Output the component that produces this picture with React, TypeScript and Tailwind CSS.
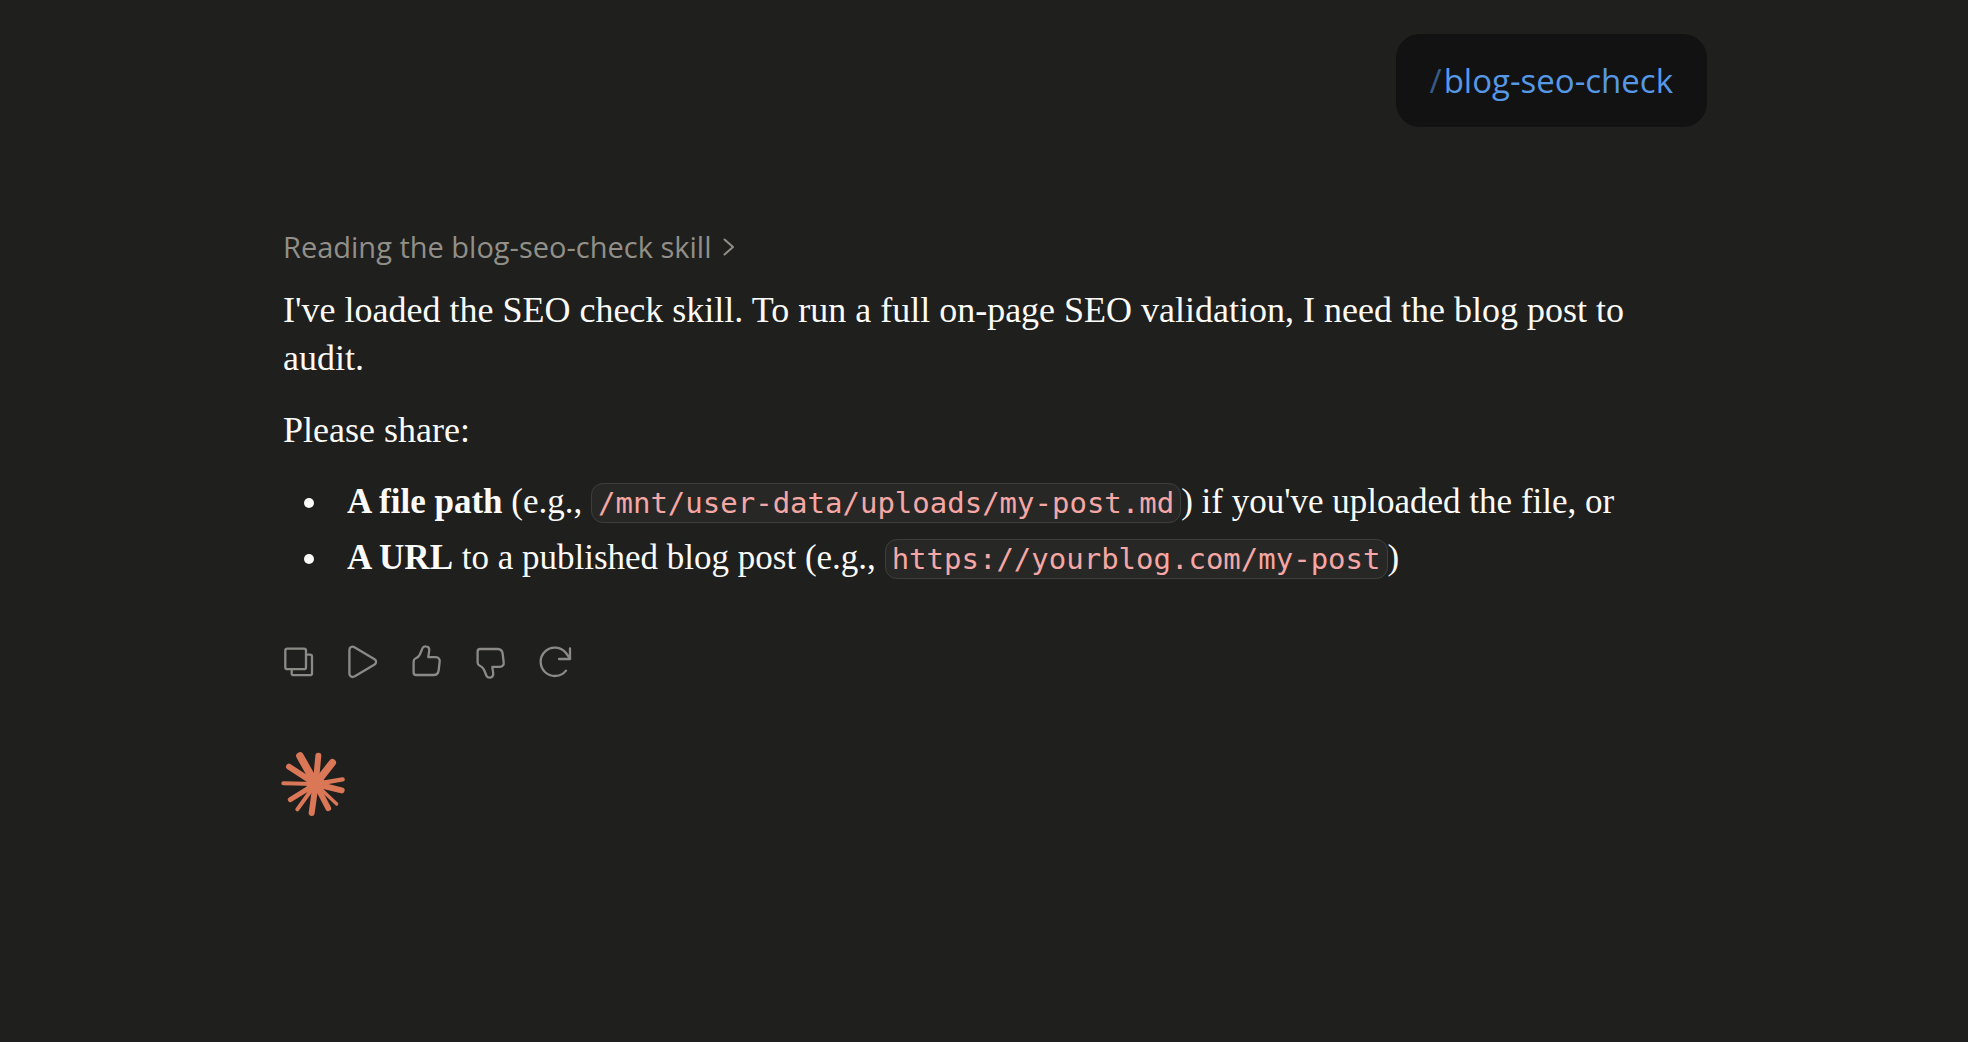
import type { ReactNode } from "react";

const THUMB =
  "M7.6 19.4c0-1.6.8-2.5 2.2-3.1 1.9-.8 3-1.7 3.9-3.6 1.1-2.3 1.8-4.2 2.7-6.3C17 4.8 18.4 4.2 20 4.4c2.2.2 3.4 2 3.2 4.2l-.9 6.6h7.6c2.5 0 4.1 1.9 3.8 4.2l-1 8.6c-.3 2.9-2.1 5-5 5H10.1c-1.5 0-2.5-1-2.5-2.5z";

function IconButton({ label, children }: { label: string; children: ReactNode }) {
  return (
    <button type="button" aria-label={label} className="flex size-10 items-center justify-center text-[#8b8a86]">
      <svg viewBox="0 0 40 40" className="size-10" fill="none" stroke="currentColor" strokeWidth={2.3} strokeLinecap="round" strokeLinejoin="round">
        {children}
      </svg>
    </button>
  );
}

function Code({ children }: { children: ReactNode }) {
  return (
    <code className="rounded-xl border border-[#3e3e3b] bg-[#272725] px-[6px] py-[2px] font-['DejaVu_Sans_Mono',monospace] text-[29px] leading-none text-[#f5a7a5]">
      {children}
    </code>
  );
}

/* Tip x, tip y and stroke width of each ray. */
const RAYS: [number, number, number][] = [
  [90, 48, 23],
  [145, 47, 18],
  [187, 68, 22],
  [218, 118, 13],
  [215, 151, 18],
  [200, 192, 10],
  [175, 205, 17],
  [125, 219, 18],
  [82, 208, 12],
  [61, 179, 15],
  [40, 130, 12],
  [57, 80, 18],
];

function Burst() {
  return (
    <svg viewBox="39 33 192 198" className="h-[66px] w-16 overflow-visible text-[#d97757]" stroke="currentColor" strokeLinecap="round" aria-hidden="true">
      {RAYS.map(([x, y, w]) => (
        <line key={`${x}-${y}`} x1={137} y1={132} x2={x} y2={y} strokeWidth={w} />
      ))}
      <circle cx={137} cy={132} r={28} fill="currentColor" stroke="none" />
    </svg>
  );
}

export default function App() {
  return (
    <main className="min-h-screen bg-[#1f1f1d] text-[#fbfbfa]">
      <div className="mx-auto max-w-[1446px] pt-[34px]">
        <div className="flex justify-end">
          <div className="rounded-3xl bg-[#121212] px-[34px] py-6 font-['Open_Sans',sans-serif] text-[33px] leading-[45px] text-[#5698e5]">
            <span className="mr-[2px] text-[#385a86]">/</span>blog-seo-check
          </div>
        </div>

        <article className="mt-[100px] pr-5 pl-[22px]">
          <button type="button" className="flex items-center gap-3 font-['Open_Sans',sans-serif] text-[29px] leading-10 text-[#918f88]">
            Reading the blog-seo-check skill
            <svg viewBox="0 0 12 20" className="h-5 w-3" fill="none" stroke="currentColor" strokeWidth={2} strokeLinecap="round" strokeLinejoin="round" aria-hidden="true">
              <path d="M1.5 2.5 10 10l-8.500 7.500" />
            </svg>
          </button>

          <div className="mt-[19px] font-['Liberation_Serif',serif] text-[36px] leading-[48px]">
            <p>
              I've loaded the SEO check skill. To run a full on-page SEO validation, I need the blog post to audit.
            </p>
            <p className="mt-6">Please share:</p>
            <ul className="mt-6 flex list-disc flex-col gap-2 pl-12 text-[35px]">
              <li className="pl-4">
                <strong className="font-bold">A file path</strong> (e.g., <Code>/mnt/user-data/uploads/my-post.md</Code>) if you've uploaded the file, or
              </li>
              <li className="pl-4">
                <strong className="font-bold">A URL</strong> to a published blog post (e.g., <Code>https://yourblog.com/my-post</Code>)
              </li>
            </ul>
          </div>

          <div className="mt-[60px] -ml-[5px] flex gap-6">
            <IconButton label="Copy">
              <rect x={7.3} y={6.7} width={20.7} height={20.5} rx={2} />
              <path d="M28 12.7h4a2 2 0 0 1 2 2V31.2a2 2 0 0 1-2 2H15.7a2 2 0 0 1-2-2v-4" />
            </IconButton>
            <IconButton label="Read aloud">
              <path d="M7.4 7.9C7.4 5.3 10.2 3.8 12.4 5.2L32.6 17.2C34.6 18.5 34.6 21.2 32.6 22.5L12.4 34.4C10.2 35.8 7.4 34.3 7.4 31.7Z" />
            </IconButton>
            <IconButton label="Good response">
              <path d={THUMB} />
            </IconButton>
            <IconButton label="Bad response">
              <path d={THUMB} transform="matrix(1 0 0 -1 0 40)" />
            </IconButton>
            <IconButton label="Retry">
              <path d="M32 28.6A14.2 14.2 0 1 1 32 11L36 16.5" />
              <path d="M36 6.5V17H25" />
            </IconButton>
          </div>

          <div className="mt-[69px]">
            <Burst />
          </div>
        </article>
      </div>
    </main>
  );
}
